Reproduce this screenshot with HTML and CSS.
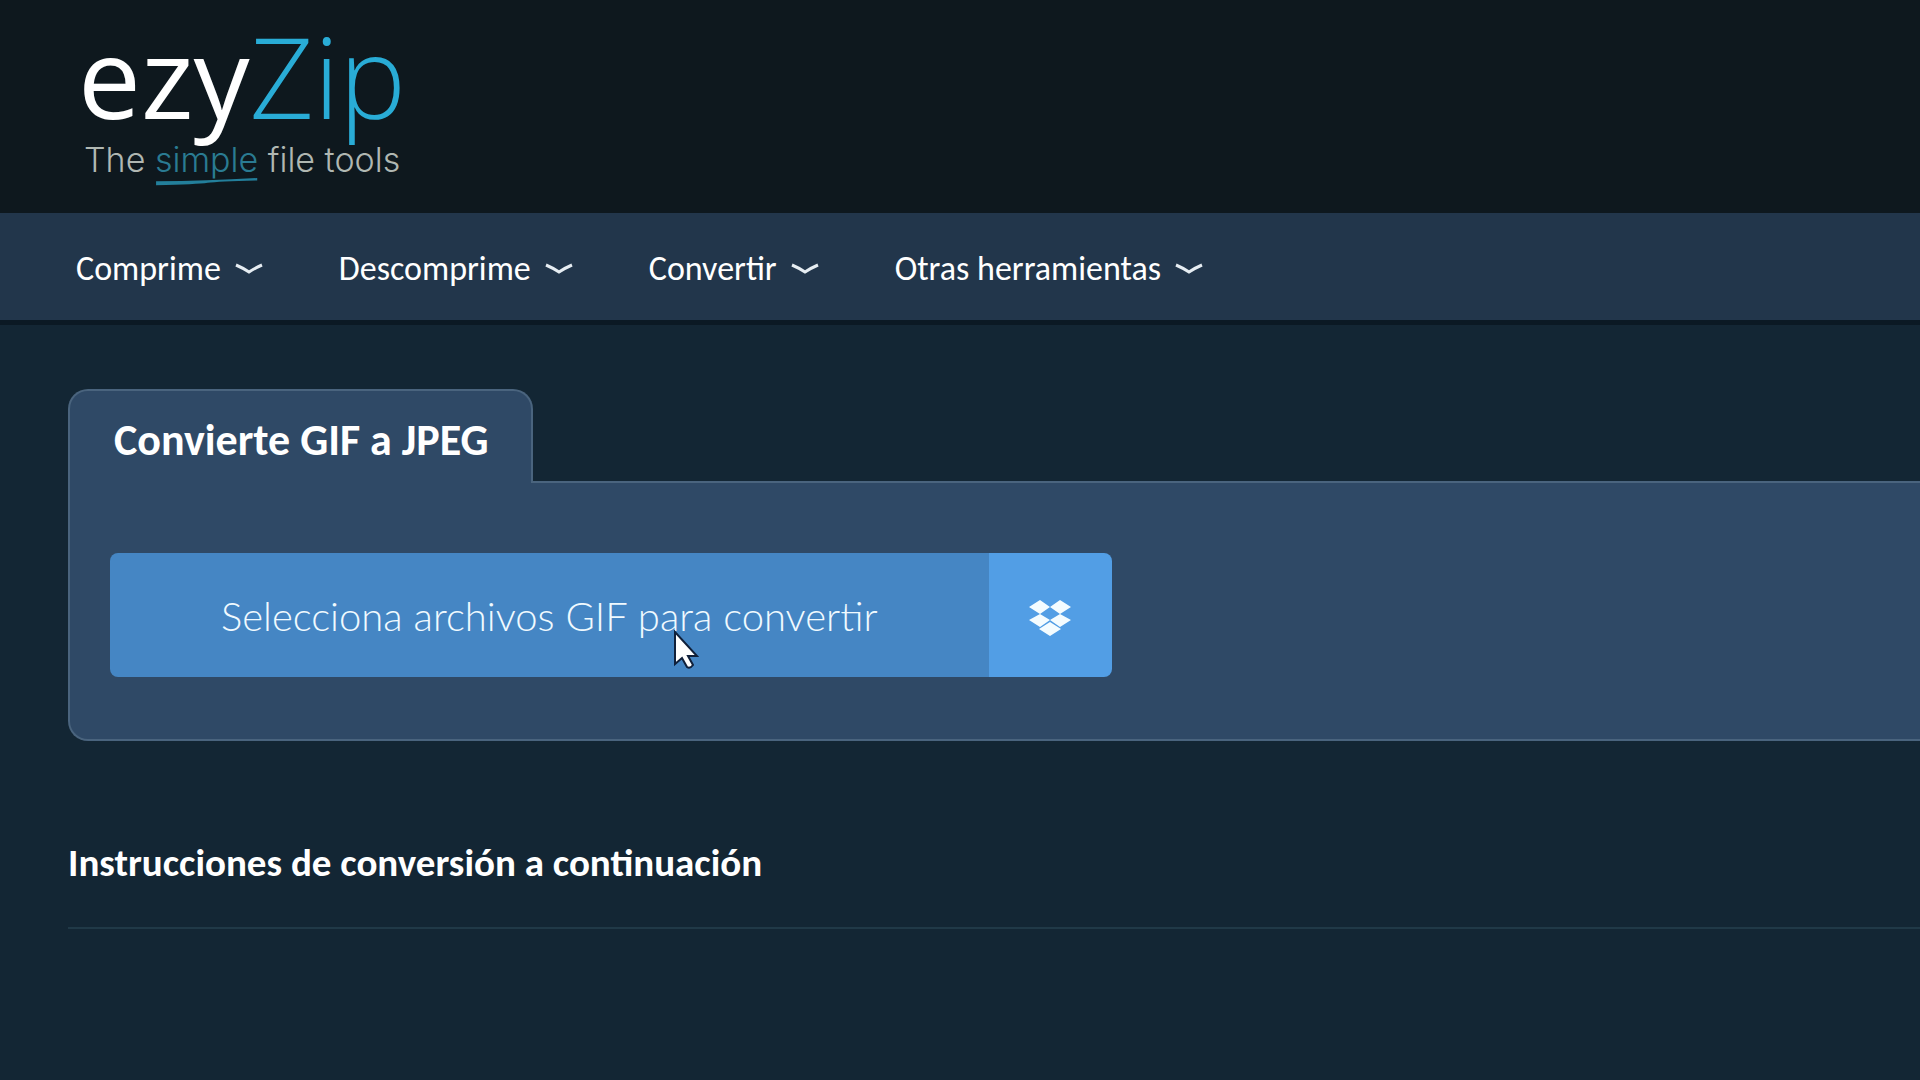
FILE: index.html
```html
<!DOCTYPE html>
<html lang="es">
<head>
<meta charset="utf-8">
<meta name="viewport" content="width=device-width, initial-scale=1">
<title>Convierte GIF a JPEG - ezyZip</title>
<link rel="stylesheet" href="styles.css">
</head>
<body>
<header class="site-header">
  <a class="logo" href="#">
    <span class="wordmark">ezy<span class="zip">Zip</span></span>
    <span class="tagline">The <span class="simple">simple<svg class="swoosh" viewBox="0 0 98 10" preserveAspectRatio="none" aria-hidden="true"><path d="M1 4 Q50 4 97 0V3Q60 4 50 6T1 9Z"/></svg></span> file tools</span>
  </a>
</header>
<nav class="main-nav">
  <button class="nav-item" type="button">Comprime <svg class="chevron" viewBox="0 0 28 12" aria-hidden="true"><path d="M1 2 Q8 5 14 9 Q20 5 27 2"/></svg></button>
  <button class="nav-item" type="button">Descomprime <svg class="chevron" viewBox="0 0 28 12" aria-hidden="true"><path d="M1 2 Q8 5 14 9 Q20 5 27 2"/></svg></button>
  <button class="nav-item" type="button">Convertir <svg class="chevron" viewBox="0 0 28 12" aria-hidden="true"><path d="M1 2 Q8 5 14 9 Q20 5 27 2"/></svg></button>
  <button class="nav-item" type="button">Otras herramientas <svg class="chevron" viewBox="0 0 28 12" aria-hidden="true"><path d="M1 2 Q8 5 14 9 Q20 5 27 2"/></svg></button>
</nav>
<main class="content">
  <h1 class="tab">Convierte GIF a JPEG</h1>
  <section class="panel">
    <div class="picker">
      <button class="select-files" type="button">Selecciona archivos GIF para convertir</button>
      <button class="dropbox" type="button" aria-label="Dropbox">
        <svg viewBox="0 0 42 37" width="42" height="37" aria-hidden="true"><path d="M11 0 21 7 11 14 0 7ZM31 0 42 7 31 14 21 7ZM11 14 21 20 11 27 0 20ZM31 14 42 20 31 27 21 20ZM21 22 32 29 21 36 10 29Z"/></svg>
      </button>
      <svg class="cursor" viewBox="0 0 26 40" aria-hidden="true"><path d="M2 2V34L9 28L14 37Q17 39 20 35L15 26H24Z"/></svg>
    </div>
  </section>
  <h2 class="instructions">Instrucciones de conversión a continuación</h2>
</main>
</body>
</html>
```
FILE: styles.css
```css
* { box-sizing: border-box; }

body {
  margin: 0;
  background: #132634;
  color: #fff;
  font-family: Carlito, Lato, sans-serif;
  overflow-x: hidden;
}

button {
  border: 0;
  color: inherit;
  font-family: inherit;
  cursor: pointer;
}

.site-header {
  padding: 14px 78px 33px;
  background: #0e181e;
}

.logo {
  display: inline-flex;
  flex-direction: column;
  gap: 2px;
  color: #fff;
  text-decoration: none;
}

.wordmark {
  font: 400 112px/124px "Open Sans", sans-serif;
}

.zip {
  color: #29acd6;
  font-weight: 300;
}

.tagline {
  padding-left: 6px;
  color: #b0b7b2;
  font: 300 34px/40px Inter, sans-serif;
}

.simple {
  position: relative;
  color: #2a7b92;
}

.swoosh {
  position: absolute;
  top: 96%;
  left: 0;
  width: 100%;
  height: 8px;
  fill: #237f9b;
}

.main-nav {
  display: flex;
  gap: 76px;
  padding: 0 76px;
  background: #22364b;
  border-bottom: 5px solid #0b1924;
}

.nav-item {
  display: flex;
  align-items: center;
  gap: 14px;
  height: 107px;
  padding: 5px 0 0;
  background: none;
  font-size: 34px;
  line-height: 40px;
}

.chevron {
  width: 28px;
  height: 12px;
  fill: none;
  stroke: #e6edf2;
  stroke-width: 3px;
}

.content {
  padding: 64px 0 80px 68px;
}

.tab {
  position: relative;
  width: fit-content;
  margin: 0 0 -2px;
  padding: 25px 42px 19px 44px;
  border: 2px solid #4a647e;
  border-bottom: 0;
  border-radius: 20px 20px 0 0;
  background: #2f4966;
  font-size: 44px;
  line-height: 48px;
}

.panel {
  padding: 70px 40px 62px;
  border: 2px solid #4a647e;
  border-right: 0;
  border-radius: 0 0 0 20px;
  background: #2f4966;
}

.picker {
  position: relative;
  display: flex;
  width: fit-content;
}

.select-files {
  padding: 39px 111px 37px;
  border-radius: 8px 0 0 8px;
  background: #4586c4;
  color: #f0faff;
  font: 300 40px/48px Lato, sans-serif;
}

.dropbox {
  display: grid;
  place-items: center;
  width: 123px;
  padding: 6px 0 0;
  border-radius: 0 8px 8px 0;
  background: #529ee5;
  fill: #f4fcff;
}

.cursor {
  position: absolute;
  top: 77px;
  left: 563px;
  width: 26px;
  height: 40px;
  fill: #fff;
  stroke: #10203a;
  stroke-width: 2px;
}

.instructions {
  margin: 0;
  padding: 100px 0 42px;
  border-bottom: 2px solid #203947;
  font-size: 39px;
  line-height: 44px;
}
```
